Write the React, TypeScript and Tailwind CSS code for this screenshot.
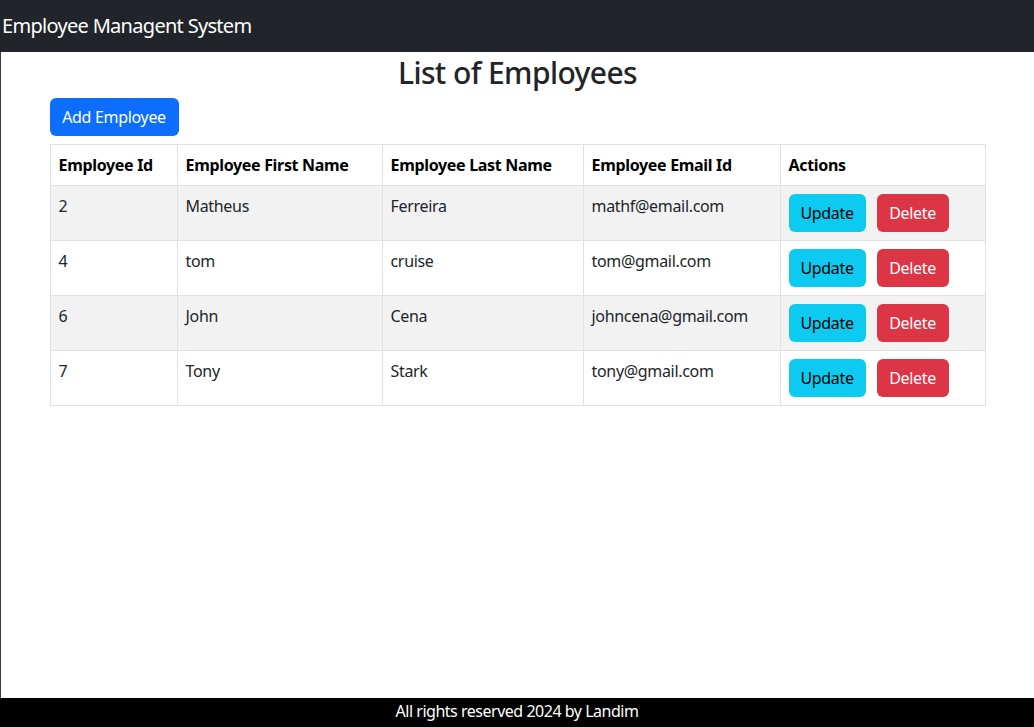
import React from "react";

type Employee = {
  id: number;
  firstName: string;
  lastName: string;
  email: string;
};

const employees: Employee[] = [
  { id: 2, firstName: "Matheus", lastName: "Ferreira", email: "mathf@email.com" },
  { id: 4, firstName: "tom", lastName: "cruise", email: "tom@gmail.com" },
  { id: 6, firstName: "John", lastName: "Cena", email: "johncena@gmail.com" },
  { id: 7, firstName: "Tony", lastName: "Stark", email: "tony@gmail.com" },
];

const headers = [
  "Employee Id",
  "Employee First Name",
  "Employee Last Name",
  "Employee Email Id",
  "Actions",
];

export default function App() {
  return (
    <div
      className="min-h-screen flex flex-col bg-white text-[#212529]"
      style={{ fontFamily: '"Noto Sans", "Open Sans", sans-serif' }}
    >
      <header className="h-[52px] bg-[#212529] flex items-center">
        <span className="pl-[2px] text-[20px] tracking-[-0.035em] text-white">
          Employee Managent System
        </span>
      </header>

      <main className="flex-1 border-l border-[#3a3a3a]">
        <div className="w-[960px] mx-auto px-3">
          <h2 className="text-center text-[30px] leading-[35px] font-medium tracking-[-0.02em] mt-[3px] mb-2">
            List of Employees
          </h2>
          <button
            type="button"
            className="h-[38px] w-[129px] rounded-md bg-[#0d6efd] text-white text-base tracking-[-0.02em] mb-2"
          >
            Add Employee
          </button>

          <table className="table-fixed w-[935px] border-collapse text-base tracking-[-0.02em]">
            <colgroup>
              <col className="w-[127px]" />
              <col className="w-[205px]" />
              <col className="w-[201px]" />
              <col className="w-[197px]" />
              <col className="w-[205px]" />
            </colgroup>
            <thead>
              <tr>
                {headers.map((h) => (
                  <th
                    key={h}
                    className="border border-[#dee2e6] px-2 py-2 text-left font-bold text-black leading-6 whitespace-nowrap"
                  >
                    {h}
                  </th>
                ))}
              </tr>
            </thead>
            <tbody>
              {employees.map((e, i) => (
                <tr key={e.id} className={i % 2 === 0 ? "bg-[#f2f2f2]" : "bg-white"}>
                  <td className="border border-[#dee2e6] px-2 pt-2 pb-2 align-top leading-6">{e.id}</td>
                  <td className="border border-[#dee2e6] px-2 pt-2 align-top leading-6">{e.firstName}</td>
                  <td className="border border-[#dee2e6] px-2 pt-2 align-top leading-6">{e.lastName}</td>
                  <td className="border border-[#dee2e6] px-2 pt-2 align-top leading-6">{e.email}</td>
                  <td className="border border-[#dee2e6] px-2 py-2 align-top">
                    <div className="flex gap-[11px]">
                      <button
                        type="button"
                        className="h-[38px] w-[77px] rounded-md bg-[#0dcaf0] text-black text-base"
                      >
                        Update
                      </button>
                      <button
                        type="button"
                        className="h-[38px] w-[72px] rounded-md bg-[#dc3545] text-white text-base"
                      >
                        Delete
                      </button>
                    </div>
                  </td>
                </tr>
              ))}
            </tbody>
          </table>
        </div>
      </main>

      <footer className="h-[29px] bg-black flex items-center justify-center">
        <span className="text-white text-base tracking-[-0.03em] -mt-[3px]">
          All rights reserved 2024 by Landim
        </span>
      </footer>
    </div>
  );
}
